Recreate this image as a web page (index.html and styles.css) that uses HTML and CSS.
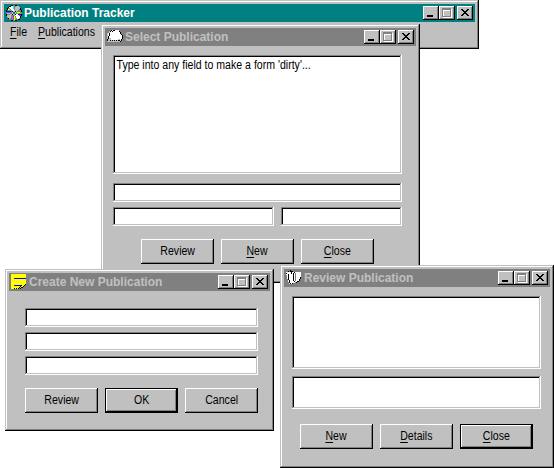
FILE: index.html
```html
<!DOCTYPE html>
<html lang="en">
<head>
<meta charset="utf-8">
<title>Publication Tracker</title>
<link rel="stylesheet" href="styles.css">
</head>
<body>
<svg class="defs" width="0" height="0">
  <symbol id="min" viewBox="0 0 12 10"><path d="M2 7h6v2H2z" fill="#000"/></symbol>
  <symbol id="max" viewBox="0 0 12 10"><path d="M2.5 1.5h8v8h-8z" fill="none" stroke="#fff"/><path d="M1.5 .5h8v8h-8zM1 1.5h9" fill="none" stroke="#808080"/><path d="M2.5 8V2.500H9" fill="none" stroke="#fff"/></symbol>
  <symbol id="close" viewBox="0 0 12 10"><path d="M2 1h2v1h1v1h2V2h1V1h2v1H9v1H8v1H7v1h1v1h1v1h1v1H8V7H7V6H5v1H4v1H2V7h1V6h1V5h1V4H4V3H3V2H2z" fill="#000"/></symbol>
</svg>
<main class="desktop">
  <section class="window main-window">
    <header class="titlebar active">
      <svg class="icon" viewBox="0 0 16 16"><path d="M5 0h6v1h2v1h1v1h1v2h1v6h-1v2h-1v1h-1v1h-2v1H5v-1H3v-1H2v-1H1v-2H0V5h1V3h1V2h1V1h2z" fill="#808080"/><path d="M10 1h2l2 2-4 4H8zM1 10l5-1-2 5H2z" fill="#c0c0c0"/><path d="M4 1h3l1 5H6L3 3zM9 9h2l3 3-2 2-2-1z" fill="#fff"/><path d="M2 4h2v1H2zM11 7h3v1h-3zM8 11h1v4H8z" fill="#ff0"/><path d="M2 5h2v1H2zM11 8h4v1h-4zM9 12h1v3H9z" fill="#0f0"/><path d="M1 6h4v1H1zM12 9h3v1h-3z" fill="#00f"/><path d="M1 7h3v1H1zM7 11h1v4H7zM13 10h2v1h-2z" fill="#f0f"/><path d="M1 8h3v1H1zM7 1h1v3H7z" fill="#0ff"/><path d="M5 0h2v1H5zM9 0h2v1H9zM3 1h2v1H3zM2 2h1v1H2zM1 3h1v2H1zM0 5h1v2H0zM0 9h1v2H0zM14 3h1v2h-1zM15 5h1v2h-1zM15 9h1v2h-1zM14 11h1v2h-1zM12 14h2v1h-2zM5 15h2v1H5zM9 15h2v1H9zM2 13h1v1H2zM6 6h4v4H6z" fill="#000"/><path d="M7 6h2v1h1v2H9v1H7V9H6V7h1z" fill="#c0c0c0"/><path d="M7 7h2v2H7z" fill="#008080"/></svg>
      <h1>Publication Tracker</h1>
      <div class="controls"><button><svg><use href="#min"/></svg></button><button><svg><use href="#max"/></svg></button><button class="x"><svg><use href="#close"/></svg></button></div>
    </header>
    <nav class="menu"><span class="text"><u>F</u>ile</span><span class="text"><u>P</u>ublications</span></nav>
  </section>

  <section class="window select-window">
    <header class="titlebar">
      <svg class="icon" viewBox="0 0 16 16"><path d="M0 4h2V2h2V1h8v2h2v10H0z" fill="#c0c0c0"/><path d="M1 4h2V2h2V1h7v2h1v7h-2v1H4V9H1z" fill="#fff"/><path d="M3 2h1V1h1v1h1v1H5V2H4v1H3zM6 1h2v1H6zM2 4h1v3H2zM1 7h1v3H1zM0 10h1v2H0zM3 11h1v1H3zM5 11h1v1H5zM7 11h1v1H7zM9 11h1v1H9zM11 11h2v1h-2zM13 12h1v1h-1zM12 2h1v1h-1zM13 3h1v2h-1zM14 5h1v1h-1zM15 6h1v4h-1zM14 10h1v2h-1z" fill="#000"/><path d="M13 5h1v6h-1zM14 6h1v4h-1z" fill="#fff"/></svg>
      <h2>Select Publication</h2>
      <div class="controls"><button><svg><use href="#min"/></svg></button><button><svg><use href="#max"/></svg></button><button class="x"><svg><use href="#close"/></svg></button></div>
    </header>
    <div class="form">
      <div class="field list"><span class="text">Type into any field to make a form 'dirty'...</span></div>
      <div class="field"></div>
      <div class="pair"><div class="field"></div><div class="field"></div></div>
      <div class="actions"><button class="btn"><span class="text">Review</span></button><button class="btn"><span class="text"><u>N</u>ew</span></button><button class="btn"><span class="text"><u>C</u>lose</span></button></div>
    </div>
  </section>

  <section class="window create-window">
    <header class="titlebar">
      <svg class="icon" viewBox="0 0 16 16"><path d="M0 0h15v10h-1v1h-1v1h-1v1h-2v1H8v1H0z" fill="#ff0"/><path d="M3 4h12v1H3zM3 11h8v1H3z" fill="#00f"/><path d="M14 10h1v1h-1zM13 11h1v1h-1zM10 11h1v1h-1zM12 12h1v1h-1zM9 12h1v1H9zM10 13h2v1h-2zM8 13h1v1H8zM9 14h1v1H9zM3 14h1v1H3zM5 14h1v1H5zM7 14h1v1H7z" fill="#000"/></svg>
      <h2>Create New Publication</h2>
      <div class="controls"><button><svg><use href="#min"/></svg></button><button><svg><use href="#max"/></svg></button><button class="x"><svg><use href="#close"/></svg></button></div>
    </header>
    <div class="form">
      <div class="field"></div><div class="field"></div><div class="field"></div>
      <div class="actions"><button class="btn"><span class="text">Review</span></button><button class="btn default"><span class="text">OK</span></button><button class="btn"><span class="text">Cancel</span></button></div>
    </div>
  </section>

  <section class="window review-window">
    <header class="titlebar">
      <svg class="icon" viewBox="0 0 16 16"><path d="M0 2h15v5h-1v2h-1v2h-2v1H9v1H6v1H3v-2H2V9H1V5H0z" fill="#fff"/><path d="M0 3h1v1H0zM2 1h1v1H2zM4 0h1v2H4zM6 1h1v1H6zM2 4h1v6H2zM3 10h1v3H3zM5 1h1v3H5zM7 3h1v8H7zM8 2h1v1H8zM8 11h1v1H8zM14 7h1v2h-1zM13 9h1v2h-1zM11 11h2v1h-2zM10 12h1v1h-1zM4 13h1v1H4zM6 13h1v1H6z" fill="#000"/><path d="M9 3h1v8H9z" fill="#808080"/></svg>
      <h2>Review Publication</h2>
      <div class="controls"><button><svg><use href="#min"/></svg></button><button><svg><use href="#max"/></svg></button><button class="x"><svg><use href="#close"/></svg></button></div>
    </header>
    <div class="form">
      <div class="field list"></div><div class="field notes"></div>
      <div class="actions"><button class="btn"><span class="text"><u>N</u>ew</span></button><button class="btn"><span class="text"><u>D</u>etails</span></button><button class="btn default"><span class="text"><u>C</u>lose</span></button></div>
    </div>
  </section>
</main>
</body>
</html>
```
FILE: styles.css
```css
* { box-sizing: border-box; }
body { margin: 0; background: #fff; overflow: hidden; font: 12px/14px "Liberation Sans", Arial, sans-serif; color: #000; }
button { font: inherit; color: inherit; padding: 0; margin: 0; border: 0; border-radius: 0; background: #c0c0c0; }
svg { display: block; shape-rendering: crispEdges; }
.defs { position: absolute; }
.desktop { position: relative; width: 554px; height: 468px; }

.window {
  position: absolute;
  padding: 4px;
  background: #c0c0c0;
  box-shadow: inset -1px -1px #000, inset 1px 1px #c0c0c0, inset -2px -2px #808080, inset 2px 2px #fff;
}
.main-window { left: 0; top: 0; width: 479px; height: 49px; }
.select-window { left: 101px; top: 24px; width: 319px; height: 259px; }
.create-window { left: 5px; top: 269px; width: 269px; height: 162px; }
.review-window { left: 280px; top: 265px; width: 274px; height: 203px; }

.titlebar { display: flex; align-items: center; height: 18px; padding: 0 2px; background: #808080; color: #c0c0c0; }
.titlebar.active { background: #008080; color: #fff; }
.icon { width: 16px; height: 16px; margin-right: 2px; }
h1, h2 { margin: 0; font-size: 12px; line-height: 18px; font-weight: bold; white-space: nowrap; }
.controls { display: flex; margin-left: auto; }
.controls button {
  width: 16px; height: 14px; padding: 2px;
  box-shadow: inset -1px -1px #000, inset 1px 1px #fff, inset -2px -2px #808080;
}
.controls svg { width: 12px; height: 10px; }
.controls .x { margin-left: 2px; }

.text { display: inline-block; white-space: nowrap; transform: scaleX(.88); transform-origin: center; }
.menu { display: flex; padding: 3px 0 0 6px; }
.menu .text { width: 28px; transform-origin: left; }
u { text-decoration: underline; text-underline-offset: 2px; text-decoration-thickness: 1px; }

.form { display: flex; flex-direction: column; }
.field {
  height: 19px; background: #fff;
  box-shadow: inset -1px -1px #fff, inset 1px 1px #808080, inset -2px -2px #c0c0c0, inset 2px 2px #000;
}
.field .text { transform-origin: left; padding: 3px 0 0 4px; }
.actions { display: flex; justify-content: center; gap: 7px; }
.btn {
  width: 73px; height: 25px; padding-bottom: 2px;
  box-shadow: inset -1px -1px #000, inset 1px 1px #fff, inset -2px -2px #808080;
}
.btn.default { box-shadow: inset 0 0 0 1px #000, inset -2px -2px #000, inset 2px 2px #fff, inset -3px -3px #808080; }

.select-window .form { padding: 9px 14px 0 8px; }
.select-window .list { height: 119px; margin-bottom: 9px; }
.pair { display: grid; grid-template-columns: 161px 121px; gap: 7px; margin-top: 5px; }
.select-window .actions { margin-top: 13px; }
.create-window .form { padding: 17px 12px 0 16px; gap: 5px; }
.create-window .actions { margin-top: 8px; }
.review-window .form { padding: 9px 9px 0 8px; }
.review-window .list { height: 73px; margin-bottom: 7px; }
.review-window .notes { height: 33px; }
.review-window .actions { margin-top: 15px; }
```
